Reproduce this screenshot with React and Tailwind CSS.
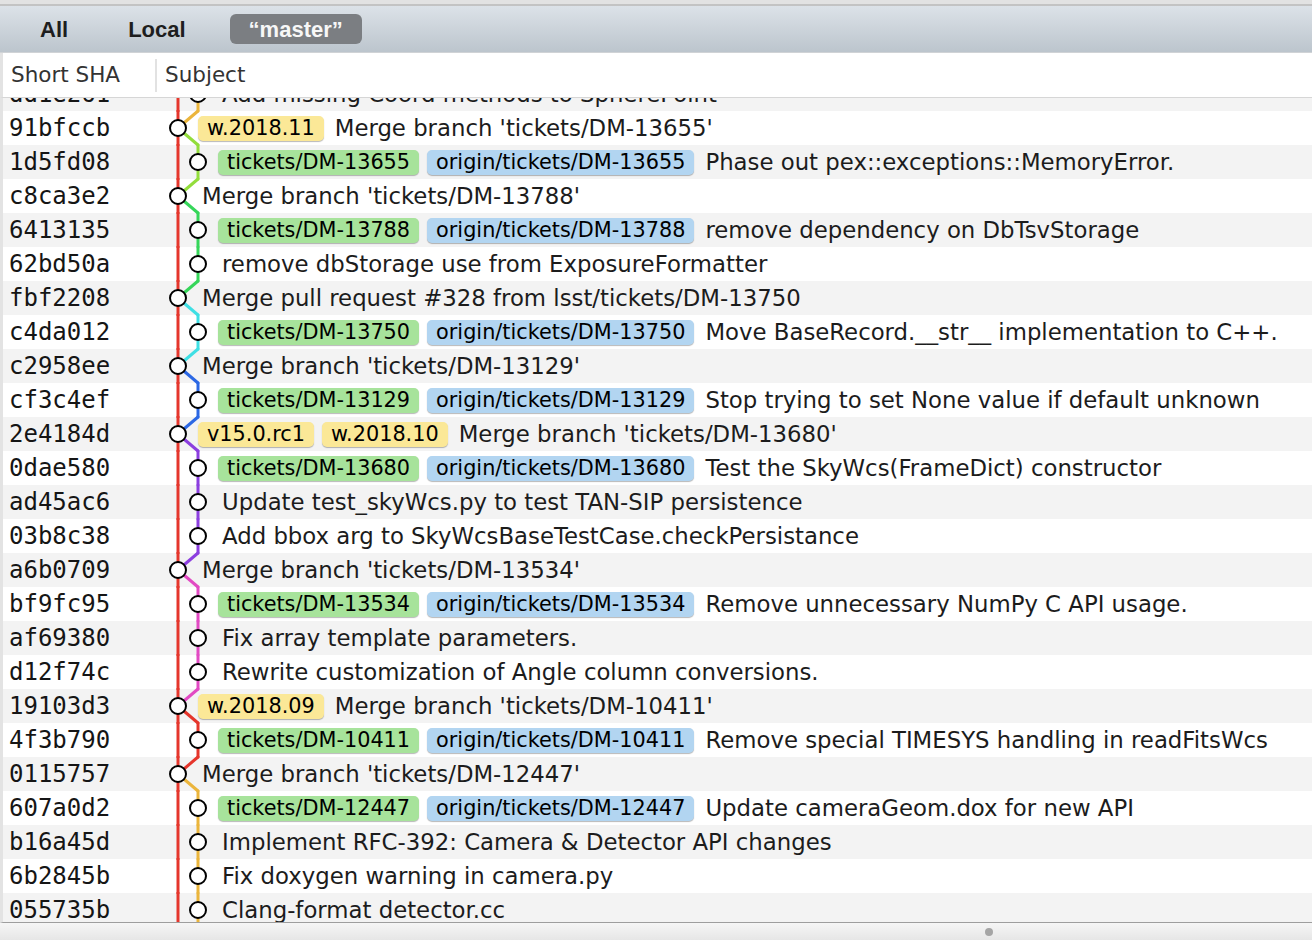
import React from "react";

const RED = "#e5362c";
const ORANGE = "#ebb53c";
const LIME = "#93dd3c";
const GREEN = "#36d65a";
const CYAN = "#3fdfe4";
const BLUE = "#2c68e4";
const PURPLE = "#8c3fdf";
const PINK = "#e24ac3";

const tag = (t) => ({ t, kind: "tag" });
const br = (name) => [
  { t: `tickets/${name}`, kind: "local" },
  { t: `origin/tickets/${name}`, kind: "remote" },
];

const rows = [
  { sha: "dd1e261", type: "b", top: ORANGE, bottom: ORANGE, subject: "Add missing Coord methods to SpherePoint" },
  { sha: "91bfccb", type: "m", top: ORANGE, bottom: LIME, labels: [tag("w.2018.11")], subject: "Merge branch 'tickets/DM-13655'" },
  { sha: "1d5fd08", type: "b", top: LIME, bottom: LIME, labels: br("DM-13655"), subject: "Phase out pex::exceptions::MemoryError." },
  { sha: "c8ca3e2", type: "m", top: LIME, bottom: GREEN, subject: "Merge branch 'tickets/DM-13788'" },
  { sha: "6413135", type: "b", top: GREEN, bottom: GREEN, labels: br("DM-13788"), subject: "remove dependency on DbTsvStorage" },
  { sha: "62bd50a", type: "b", top: GREEN, bottom: GREEN, subject: "remove dbStorage use from ExposureFormatter" },
  { sha: "fbf2208", type: "m", top: GREEN, bottom: CYAN, subject: "Merge pull request #328 from lsst/tickets/DM-13750" },
  { sha: "c4da012", type: "b", top: CYAN, bottom: CYAN, labels: br("DM-13750"), subject: "Move BaseRecord.__str__ implementation to C++." },
  { sha: "c2958ee", type: "m", top: CYAN, bottom: BLUE, subject: "Merge branch 'tickets/DM-13129'" },
  { sha: "cf3c4ef", type: "b", top: BLUE, bottom: BLUE, labels: br("DM-13129"), subject: "Stop trying to set None value if default unknown" },
  { sha: "2e4184d", type: "m", top: BLUE, bottom: PURPLE, labels: [tag("v15.0.rc1"), tag("w.2018.10")], subject: "Merge branch 'tickets/DM-13680'" },
  { sha: "0dae580", type: "b", top: PURPLE, bottom: PURPLE, labels: br("DM-13680"), subject: "Test the SkyWcs(FrameDict) constructor" },
  { sha: "ad45ac6", type: "b", top: PURPLE, bottom: PURPLE, subject: "Update test_skyWcs.py to test TAN-SIP persistence" },
  { sha: "03b8c38", type: "b", top: PURPLE, bottom: PURPLE, subject: "Add bbox arg to SkyWcsBaseTestCase.checkPersistance" },
  { sha: "a6b0709", type: "m", top: PURPLE, bottom: PINK, subject: "Merge branch 'tickets/DM-13534'" },
  { sha: "bf9fc95", type: "b", top: PINK, bottom: PINK, labels: br("DM-13534"), subject: "Remove unnecessary NumPy C API usage." },
  { sha: "af69380", type: "b", top: PINK, bottom: PINK, subject: "Fix array template parameters." },
  { sha: "d12f74c", type: "b", top: PINK, bottom: PINK, subject: "Rewrite customization of Angle column conversions." },
  { sha: "19103d3", type: "m", top: PINK, bottom: RED, labels: [tag("w.2018.09")], subject: "Merge branch 'tickets/DM-10411'" },
  { sha: "4f3b790", type: "b", top: RED, bottom: RED, labels: br("DM-10411"), subject: "Remove special TIMESYS handling in readFitsWcs" },
  { sha: "0115757", type: "m", top: RED, bottom: ORANGE, subject: "Merge branch 'tickets/DM-12447'" },
  { sha: "607a0d2", type: "b", top: ORANGE, bottom: ORANGE, labels: br("DM-12447"), subject: "Update cameraGeom.dox for new API" },
  { sha: "b16a45d", type: "b", top: ORANGE, bottom: ORANGE, subject: "Implement RFC-392: Camera & Detector API changes" },
  { sha: "6b2845b", type: "b", top: ORANGE, bottom: ORANGE, subject: "Fix doxygen warning in camera.py" },
  { sha: "055735b", type: "b", top: ORANGE, bottom: ORANGE, subject: "Clang-format detector.cc" },
];

// one graph cell per row, lane 0 = master, lane 1 = topic branch
const Graph = ({ type, top, bottom }) => {
  const w = type === "m" ? 40 : 60;
  const nx = type === "m" ? 20 : 40;
  return (
    <svg width={w} height={34} className="shrink-0" style={{ overflow: "visible" }}>
      <line x1={20} y1={-1} x2={20} y2={35} stroke={RED} strokeWidth={3} />
      {type === "m" ? (
        <>
          <line x1={40} y1={0} x2={20} y2={17} stroke={top} strokeWidth={3} strokeLinecap="round" />
          <line x1={20} y1={17} x2={40} y2={34} stroke={bottom} strokeWidth={3} strokeLinecap="round" />
        </>
      ) : (
        <>
          <line x1={40} y1={0} x2={40} y2={17} stroke={top} strokeWidth={3} strokeLinecap="round" />
          <line x1={40} y1={17} x2={40} y2={34} stroke={bottom} strokeWidth={3} strokeLinecap="round" />
        </>
      )}
      <circle cx={nx} cy={17} r={8} fill="#ffffff" stroke="#000000" strokeWidth={2} />
    </svg>
  );
};

const Label = ({ t, kind }) => {
  const bg =
    kind === "tag" ? "bg-[#fbe897]" : kind === "local" ? "bg-[#a7e39b]" : "bg-[#b2d5f1]";
  return (
    <span
      className={`${bg} h-[25px] px-[9px] rounded-[5px] flex items-center text-[20.8px] leading-none text-black shadow-[0_1px_1px_rgba(0,0,0,0.28)] whitespace-nowrap`}
    >
      {t}
    </span>
  );
};

const Row = ({ row, i }) => (
  <div className={`flex items-center h-[34px] ${i % 2 === 0 ? "bg-[#f3f3f3]" : "bg-white"}`}>
    <div className="w-[155px] shrink-0 pl-[6px] font-['DejaVu_Sans_Mono',monospace] text-[24px] leading-none text-[#151515]">
      {row.sha}
    </div>
    <Graph type={row.type} top={row.top} bottom={row.bottom} />
    {row.labels && (
      <div className="flex items-center gap-[8px] mr-[7px]">
        {row.labels.map((l) => (
          <Label key={l.t} {...l} />
        ))}
      </div>
    )}
    <div className="ml-[4px] text-[22.8px] leading-none text-[#1c1c1c] whitespace-nowrap">
      {row.subject}
    </div>
  </div>
);

export default function App() {
  return (
    <div className="w-[1312px] h-[940px] overflow-hidden flex flex-col bg-white font-['DejaVu_Sans',sans-serif]">
      <div className="h-[4px] bg-[#e2e2e2] shrink-0" />
      <div className="h-[2px] bg-[#c3c3c3] shrink-0" />
      {/* Toolbar */}
      <div className="h-[47px] shrink-0 flex items-center bg-gradient-to-b from-[#dce2e8] to-[#bcc5cd] border-b border-[#d0d3d6] font-['Liberation_Sans',sans-serif] font-bold text-[22px] text-[#1e1e1e]">
        <span className="ml-[40px]">All</span>
        <span className="ml-[60px]">Local</span>
        <span className="ml-[44px] h-[30px] px-[19px] rounded-[6px] bg-[#7b7e82] text-[#f7f7f7] flex items-center">
          “master”
        </span>
      </div>
      {/* Column header */}
      <div className="h-[45px] shrink-0 flex items-center border-l-[3px] border-l-[#e3e3e3] border-b border-b-[#d6d6d6] text-[21.5px] text-[#333333]">
        <div className="w-[152px] pl-[8px]">Short SHA</div>
        <div className="w-[2px] h-[33px] bg-[#e2e2e2]" />
        <div className="pl-[8px]">Subject</div>
      </div>
      {/* Rows */}
      <div className="flex-1 min-h-0 overflow-hidden border-l-[3px] border-l-[#e3e3e3] border-b border-b-[#9e9e9e]">
        <div className="mt-[-21px]">
          {rows.map((row, i) => (
            <Row key={row.sha} row={row} i={i} />
          ))}
        </div>
      </div>
      {/* Bottom bar */}
      <div className="h-[17px] shrink-0 flex items-center bg-gradient-to-b from-[#f6f6f6] to-[#e6e6e6]">
        <div className="ml-[985px] w-[8px] h-[8px] rounded-full bg-[#a5a5a5]" />
      </div>
    </div>
  );
}
